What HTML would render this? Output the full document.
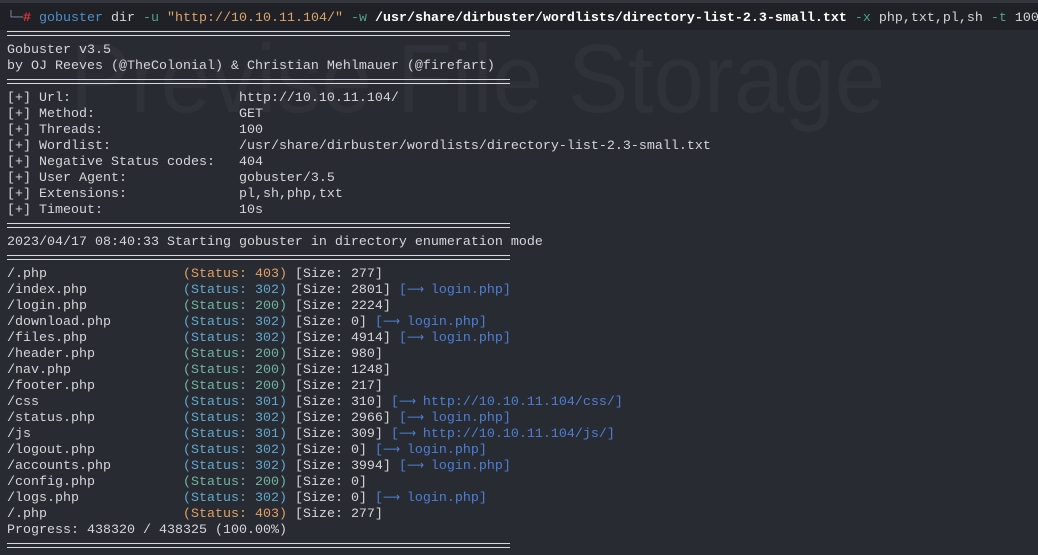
<!DOCTYPE html>
<html><head><meta charset="utf-8"><style>
html,body{margin:0;padding:0;width:1038px;height:552px;overflow:hidden;background:#292b32;}
#band{position:absolute;left:0;top:0;width:1038px;height:30px;background:#1f2126;}
#tb{position:absolute;left:0;top:0;width:1038px;height:3px;background:#33363d;}
svg{position:absolute;left:0;top:0;}
pre{position:absolute;left:7px;top:11px;margin:0;font-family:"Liberation Mono","DejaVu Sans Mono",monospace;font-size:13.33px;line-height:16px;color:#d6d6d6;white-space:pre;}
.sep{display:inline-block;width:503px;height:3px;border-top:1px solid #d8d8d8;border-bottom:1px solid #d8d8d8;vertical-align:middle;}
.r{color:#e0343a;font-weight:bold}.g{color:#7a8fb0}.b{color:#4c8fc9}.y{color:#dca36a}.t{color:#4fa08c}.w{color:#fff;font-weight:bold}
.s2{color:#6fb5a3}.s3{color:#5fa9cf}.s4{color:#e3a062}.l{color:#4b7fd6}
.a{display:inline-block;width:16px;height:10px;line-height:10px;overflow:visible;text-align:center;font-family:"DejaVu Sans",sans-serif;font-size:12px;vertical-align:baseline;}
</style></head><body>
<div id="band"></div><div id="tb"></div>
<svg width="1038" height="552"><text x="70" y="112" font-family="Liberation Sans,sans-serif" font-size="97" fill="#303239" textLength="815" lengthAdjust="spacingAndGlyphs">Previse File Storage</text></svg>
<pre><span class="g">└─</span><span class="r">#</span> <span class="b">gobuster</span> dir <span class="t">-u</span> <span class="y">"http://10.10.11.104/"</span> <span class="t">-w</span> <span class="w">/usr/share/dirbuster/wordlists/directory-list-2.3-small.txt</span> <span class="t">-x</span> php,txt,pl,sh <span class="t">-t</span> 100
<span class="sep"></span>
Gobuster v3.5
by OJ Reeves (@TheColonial) &amp; Christian Mehlmauer (@firefart)
<span class="sep"></span>
[+] Url:                     http://10.10.11.104/
[+] Method:                  GET
[+] Threads:                 100
[+] Wordlist:                /usr/share/dirbuster/wordlists/directory-list-2.3-small.txt
[+] Negative Status codes:   404
[+] User Agent:              gobuster/3.5
[+] Extensions:              pl,sh,php,txt
[+] Timeout:                 10s
<span class="sep"></span>
2023/04/17 08:40:33 Starting gobuster in directory enumeration mode
<span class="sep"></span>
/.php                 <span class="s4">(Status: 403)</span> [Size: 277]
/index.php            <span class="s3">(Status: 302)</span> [Size: 2801] <span class="l">[<span class="a">⟶</span> login.php]</span>
/login.php            <span class="s2">(Status: 200)</span> [Size: 2224]
/download.php         <span class="s3">(Status: 302)</span> [Size: 0] <span class="l">[<span class="a">⟶</span> login.php]</span>
/files.php            <span class="s3">(Status: 302)</span> [Size: 4914] <span class="l">[<span class="a">⟶</span> login.php]</span>
/header.php           <span class="s2">(Status: 200)</span> [Size: 980]
/nav.php              <span class="s2">(Status: 200)</span> [Size: 1248]
/footer.php           <span class="s2">(Status: 200)</span> [Size: 217]
/css                  <span class="s3">(Status: 301)</span> [Size: 310] <span class="l">[<span class="a">⟶</span> http://10.10.11.104/css/]</span>
/status.php           <span class="s3">(Status: 302)</span> [Size: 2966] <span class="l">[<span class="a">⟶</span> login.php]</span>
/js                   <span class="s3">(Status: 301)</span> [Size: 309] <span class="l">[<span class="a">⟶</span> http://10.10.11.104/js/]</span>
/logout.php           <span class="s3">(Status: 302)</span> [Size: 0] <span class="l">[<span class="a">⟶</span> login.php]</span>
/accounts.php         <span class="s3">(Status: 302)</span> [Size: 3994] <span class="l">[<span class="a">⟶</span> login.php]</span>
/config.php           <span class="s2">(Status: 200)</span> [Size: 0]
/logs.php             <span class="s3">(Status: 302)</span> [Size: 0] <span class="l">[<span class="a">⟶</span> login.php]</span>
/.php                 <span class="s4">(Status: 403)</span> [Size: 277]
Progress: 438320 / 438325 (100.00%)
<span class="sep"></span></pre>
</body></html>
